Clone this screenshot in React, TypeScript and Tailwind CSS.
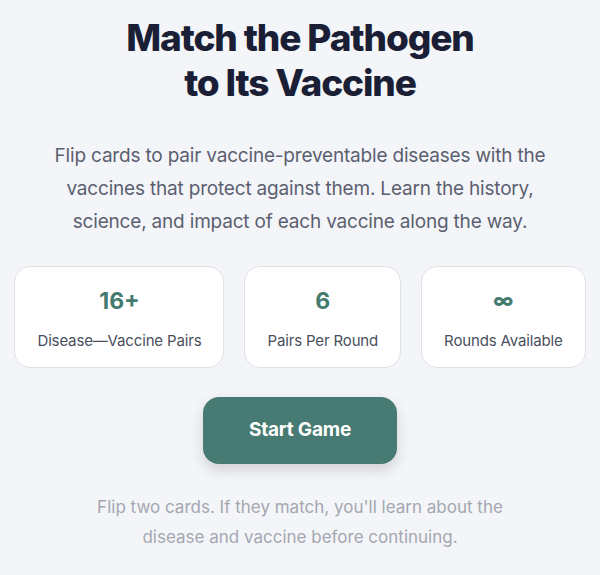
import React from "react";

const stats = [
  { value: "16+", label: "Disease—Vaccine Pairs", inf: false },
  { value: "6", label: "Pairs Per Round", inf: false },
  { value: "∞", label: "Rounds Available", inf: true },
];

export default function App() {
  return (
    <div
      className="min-h-[575px] w-full bg-[#f4f5f9] flex flex-col items-center"
      style={{ fontFamily: "Inter, 'Noto Sans', sans-serif" }}
    >
      <h1 className="mt-[15px] text-center text-[37px] leading-[45px] font-extrabold tracking-[-0.03em] text-[#1a1f36]">
        Match the Pathogen
        <br />
        to Its Vaccine
      </h1>
      <p className="mt-[34px] text-center text-[19px] leading-[33px] text-[#5b6070] tracking-[-0.01em]">
        Flip cards to pair vaccine-preventable diseases with the
        <br />
        vaccines that protect against them. Learn the history,
        <br />
        science, and impact of each vaccine along the way.
      </p>
      <div className="mt-[28px] flex gap-[20px]">
        {stats.map((s) => (
          <div
            key={s.label}
            className="flex flex-col items-center rounded-[16px] border border-[#dfe1e7] bg-white px-[22px] pt-[18px] h-[102px] whitespace-nowrap"
          >
            <div
              className={
                s.inf
                  ? "h-[32px] text-[20px] leading-[32px] font-extrabold text-[#447a6f]"
                  : "h-[32px] text-[23px] leading-[32px] font-bold text-[#447a6f]"
              }
            >
              {s.value}
            </div>
            <div className="mt-[12px] text-[15px] leading-[24px] tracking-[-0.01em] text-[#4a4f5c]">{s.label}</div>
          </div>
        ))}
      </div>
      <button className="mt-[29px] h-[67px] w-[194px] rounded-[16px] bg-[#477a72] text-white text-[19px] font-bold shadow-[0_6px_14px_rgba(0,0,0,0.15)] tracking-[-0.01em]">
        Start Game
      </button>
      <p className="mt-[28px] text-center text-[17px] leading-[30px] text-[#a3a7b1]">
        Flip two cards. If they match, you'll learn about the
        <br />
        disease and vaccine before continuing.
      </p>
    </div>
  );
}
